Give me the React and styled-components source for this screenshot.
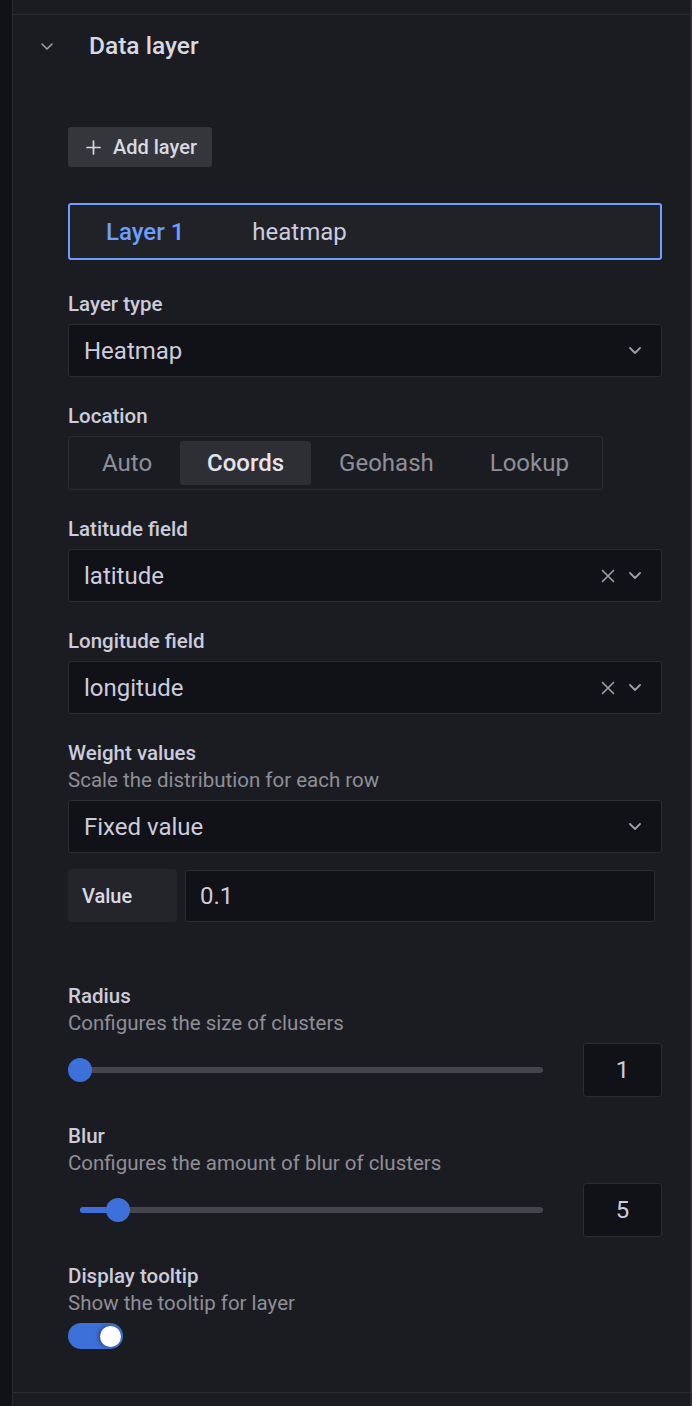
import React from "react";
import styled, { createGlobalStyle } from "styled-components";

const GlobalStyle = createGlobalStyle`
  html, body {
    margin: 0;
    padding: 0;
    background: #111217;
  }
  * {
    box-sizing: border-box;
  }
  body {
    font-family: Roboto, "Liberation Sans", sans-serif;
    color: #ccccdc;
  }
`;

const Page = styled.div`
  display: flex;
  min-height: 100vh;
`;

const Gutter = styled.div`
  width: 12px;
  flex-shrink: 0;
  background: #111217;
`;

const Panel = styled.div`
  flex: 1;
  display: flex;
  flex-direction: column;
  background: #1b1c21;
  border-left: 1px solid #2a2b30;
  border-right: 2px solid #2a2b30;
`;

const TopStrip = styled.div`
  height: 15px;
  border-bottom: 1px solid #2a2b30;
`;

const Section = styled.div`
  border-bottom: 1px solid #2a2b30;
`;

const Header = styled.div`
  height: 62px;
  display: flex;
  align-items: center;
  gap: 36px;
  padding-left: 28px;
`;

const Title = styled.h2`
  margin: 0;
  font-size: 24.5px;
  line-height: 24px;
  font-weight: 500;
  color: #d8d9e1;
`;

const Body = styled.div`
  padding: 50px 28px 43px 55px;
  display: flex;
  flex-direction: column;
`;

const AddButton = styled.button`
  align-self: flex-start;
  height: 40px;
  display: flex;
  align-items: center;
  gap: 12px;
  padding: 0 15px 0 18px;
  border: none;
  border-radius: 3px;
  background: #34363c;
  color: #d8d9e1;
  font-family: inherit;
  font-size: 20px;
  font-weight: 500;
`;

const LayerItem = styled.div`
  margin-top: 36px;
  height: 57px;
  display: flex;
  align-items: center;
  gap: 68px;
  padding-left: 36px;
  border: 2px solid #6e9fff;
  border-radius: 3px;
  background: #202228;
  font-size: 24px;
`;

const LayerName = styled.span`
  color: #6e9fff;
  font-weight: 500;
`;

const LayerKind = styled.span`
  color: #ccccdc;
`;

const Field = styled.div`
  margin-top: ${(p) => p.$top || 27}px;
  display: flex;
  flex-direction: column;
`;

const Label = styled.div`
  font-size: 20.5px;
  line-height: 24px;
  font-weight: 500;
  color: #ccccdc;
`;

const Description = styled.div`
  margin-top: 3px;
  font-size: 20.5px;
  line-height: 24px;
  color: #8e8f99;
`;

const Control = styled.div`
  margin-top: 8px;
`;

const SelectBox = styled.div`
  height: 53px;
  display: flex;
  align-items: center;
  padding: 0 20px 0 15px;
  background: #111217;
  border: 1px solid #2c2d33;
  border-radius: 3px;
  font-size: 24px;
  color: #ccccdc;
`;

const SelectValue = styled.span`
  flex: 1;
`;

const Icons = styled.span`
  display: flex;
  align-items: center;
  gap: 14px;
  color: #9d9ea6;
`;

const RadioGroup = styled.div`
  width: 535px;
  height: 54px;
  display: flex;
  align-items: center;
  padding: 0 5px;
  border: 1px solid #2c2d33;
  border-radius: 3px;
`;

const RadioOption = styled.div`
  height: 44px;
  display: flex;
  align-items: center;
  padding: 0 ${(p) => p.$pad || 28}px;
  border-radius: 3px;
  font-size: 24px;
  font-weight: ${(p) => (p.$active ? 500 : 400)};
  color: ${(p) => (p.$active ? "#e4e4ec" : "#8e8f99")};
  background: ${(p) => (p.$active ? "#2e2f35" : "transparent")};
`;

const ValueRow = styled.div`
  margin-top: 16px;
  display: flex;
  align-items: center;
  gap: 8px;
  padding-right: 7px;
`;

const ValueLabel = styled.div`
  width: 109px;
  height: 53px;
  display: flex;
  align-items: center;
  padding-left: 14px;
  border-radius: 4px;
  background: #24252b;
  font-size: 20px;
  font-weight: 500;
  color: #d8d9e1;
`;

const TextInput = styled.div`
  flex: 1;
  height: 52px;
  display: flex;
  align-items: center;
  padding-left: 14px;
  background: #111217;
  border: 1px solid #2c2d33;
  border-radius: 3px;
  font-size: 24px;
  color: #ccccdc;
`;

const SliderRow = styled.div`
  display: flex;
  align-items: center;
  gap: 28px;
`;

const SliderArea = styled.div`
  flex: 1;
  height: 54px;
  padding: 0 12px;
  display: flex;
  align-items: center;
`;

const Track = styled.div`
  position: relative;
  flex: 1;
  height: 6px;
  border-radius: 3px;
  background: #45464d;
`;

const Fill = styled.div`
  height: 100%;
  border-radius: 3px;
  background: #3d71d9;
`;

const Thumb = styled.div`
  position: absolute;
  top: 50%;
  width: 24px;
  height: 24px;
  margin: -12px 0 0 -12px;
  border-radius: 50%;
  background: #3d71d9;
`;

const NumberBox = styled.div`
  width: 79px;
  height: 54px;
  display: flex;
  align-items: center;
  justify-content: center;
  background: #111217;
  border: 1px solid #2c2d33;
  border-radius: 3px;
  font-size: 24px;
  color: #ccccdc;
`;

const Switch = styled.div`
  width: 55px;
  height: 26px;
  display: flex;
  align-items: center;
  justify-content: flex-end;
  padding-right: 2px;
  border-radius: 13px;
  background: #3d71d9;
`;

const Knob = styled.div`
  width: 21px;
  height: 21px;
  border-radius: 50%;
  background: #ffffff;
  box-shadow: -2px 0 4px rgba(0, 0, 0, 0.35);
`;

const Chevron = ({ size = 12, color = "currentColor", width = 1.8 }) => (
  <svg width={size} height={size / 2 + 1} viewBox="0 0 12 7" fill="none">
    <path d="M1 1l5 5 5-5" stroke={color} strokeWidth={width} strokeLinecap="round" strokeLinejoin="round" />
  </svg>
);

const Cross = () => (
  <svg width="14" height="14" viewBox="0 0 14 14" fill="none">
    <path d="M1.5 1.5l11 11M12.5 1.5l-11 11" stroke="currentColor" strokeWidth="1.7" strokeLinecap="round" />
  </svg>
);

const Plus = () => (
  <svg width="15" height="15" viewBox="0 0 15 15" fill="none">
    <path d="M7.5 1v13M1 7.5h13" stroke="currentColor" strokeWidth="1.7" strokeLinecap="round" />
  </svg>
);

const Select = ({ value, clearable }) => (
  <SelectBox>
    <SelectValue>{value}</SelectValue>
    <Icons>
      {clearable && <Cross />}
      <Chevron />
    </Icons>
  </SelectBox>
);

const Slider = ({ value, min, max }) => {
  const pct = ((value - min) / (max - min)) * 100;
  return (
    <SliderRow>
      <SliderArea>
        <Track>
          <Fill style={{ width: `${pct}%` }} />
          <Thumb style={{ left: `${pct}%` }} />
        </Track>
      </SliderArea>
      <NumberBox>{value}</NumberBox>
    </SliderRow>
  );
};

const locations = [
  { name: "Auto", pad: 28 },
  { name: "Coords", pad: 27, active: true },
  { name: "Geohash", pad: 28 },
  { name: "Lookup", pad: 28 },
];

export default function App() {
  return (
    <>
      <GlobalStyle />
      <Page>
        <Gutter />
        <Panel>
          <TopStrip />
          <Section>
            <Header>
              <Chevron color="#9d9ea6" width={1.6} />
              <Title>Data layer</Title>
            </Header>
            <Body>
              <AddButton>
                <Plus />
                Add layer
              </AddButton>

              <LayerItem>
                <LayerName>Layer 1</LayerName>
                <LayerKind>heatmap</LayerKind>
              </LayerItem>

              <Field $top={32}>
                <Label>Layer type</Label>
                <Control>
                  <Select value="Heatmap" />
                </Control>
              </Field>

              <Field>
                <Label>Location</Label>
                <Control>
                  <RadioGroup>
                    {locations.map((l) => (
                      <RadioOption key={l.name} $active={l.active} $pad={l.pad}>
                        {l.name}
                      </RadioOption>
                    ))}
                  </RadioGroup>
                </Control>
              </Field>

              <Field>
                <Label>Latitude field</Label>
                <Control>
                  <Select value="latitude" clearable />
                </Control>
              </Field>

              <Field>
                <Label>Longitude field</Label>
                <Control>
                  <Select value="longitude" clearable />
                </Control>
              </Field>

              <Field>
                <Label>Weight values</Label>
                <Description>Scale the distribution for each row</Description>
                <Control>
                  <Select value="Fixed value" />
                </Control>
                <ValueRow>
                  <ValueLabel>Value</ValueLabel>
                  <TextInput>0.1</TextInput>
                </ValueRow>
              </Field>

              <Field $top={62}>
                <Label>Radius</Label>
                <Description>Configures the size of clusters</Description>
                <Control>
                  <Slider value={1} min={1} max={50} />
                </Control>
              </Field>

              <Field>
                <Label>Blur</Label>
                <Description>Configures the amount of blur of clusters</Description>
                <Control>
                  <Slider value={5} min={1} max={50} />
                </Control>
              </Field>

              <Field>
                <Label>Display tooltip</Label>
                <Description>Show the tooltip for layer</Description>
                <Control>
                  <Switch>
                    <Knob />
                  </Switch>
                </Control>
              </Field>
            </Body>
          </Section>
        </Panel>
      </Page>
    </>
  );
}
